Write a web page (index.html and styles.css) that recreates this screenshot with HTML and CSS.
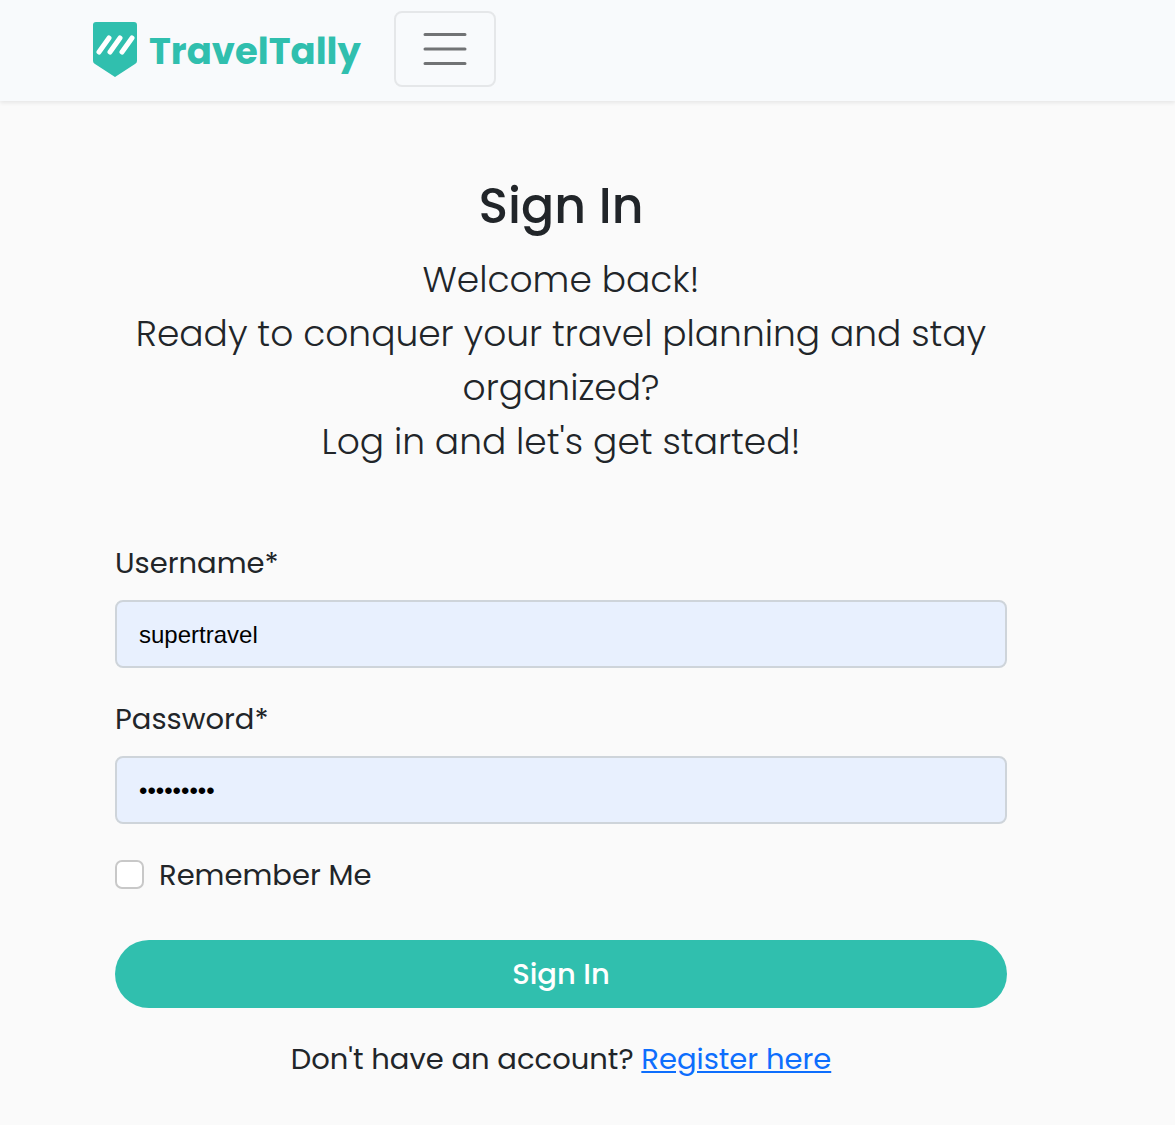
FILE: index.html
```html
<!DOCTYPE html>
<html lang="en">
<head>
  <meta charset="utf-8">
  <meta name="viewport" content="width=device-width, initial-scale=1">
  <title>Sign In | TravelTally</title>
  <link rel="stylesheet" href="styles.css">
</head>
<body>
  <header class="navbar">
    <a class="brand" href="#">
      <svg class="brand-mark" viewBox="0 0 46 56" aria-hidden="true">
        <path fill="#30bfae" d="M4 1h38q3 0 3 3v36q0 2-2 3L23 56 3 43q-2-1-2-3V4q0-3 3-3z"/>
        <path fill="none" stroke="#fff" stroke-width="5" stroke-linecap="round" d="M7 31 17 17M18 31l10-14M30 31l10-14"/>
      </svg>
      <span class="brand-name">TravelTally</span>
    </a>
    <button class="menu-toggle" type="button" aria-label="Toggle navigation">
      <svg class="menu-icon" viewBox="0 0 60 60" aria-hidden="true">
        <path fill="none" stroke="#717375" stroke-width="3" stroke-linecap="round" d="M10 15.500h40M10 30h40M10 44.500h40"/>
      </svg>
    </button>
  </header>

  <main class="page">
    <h1 class="title">Sign In</h1>
    <p class="lead">Welcome back!<br>Ready to conquer your travel planning and stay organized?<br>Log in and let's get started!</p>

    <form class="form">
      <div class="field">
        <label class="label" for="username">Username*</label>
        <input class="input" id="username" type="text" value="supertravel">
      </div>
      <div class="field">
        <label class="label" for="password">Password*</label>
        <input class="input" id="password" type="password" value="traveller">
      </div>
      <div class="remember">
        <input class="check" id="remember" type="checkbox">
        <label class="label" for="remember">Remember Me</label>
      </div>
      <button class="submit" type="submit">Sign In</button>
    </form>
    <p class="register">Don't have an account? <a class="link" href="#">Register here</a></p>
  </main>
</body>
</html>
```
FILE: styles.css
```css
* {
  box-sizing: border-box;
}

body {
  margin: 0;
  background: #fafafa;
  color: #212529;
  font-family: Poppins, Inter, "Open Sans", sans-serif;
  font-size: 29px;
  line-height: 44px;
}

.navbar {
  display: flex;
  align-items: center;
  gap: 33px;
  padding: 11px 92px 14px;
  background: #f8fafc;
  box-shadow: 0 2px 4px rgba(0, 0, 0, 0.08);
}

.brand {
  display: flex;
  align-items: center;
  gap: 11px;
  color: #30bfae;
  text-decoration: none;
}

.brand-mark {
  width: 46px;
  height: 56px;
}

.brand-name {
  padding-top: 4px;
  font-size: 37px;
  font-weight: 700;
}

.menu-toggle {
  display: flex;
  padding: 6px 19px;
  border: 2px solid #e5e7e9;
  border-radius: 8px;
  background: transparent;
}

.menu-icon {
  width: 60px;
  height: 60px;
}

.page {
  padding: 76px 168px 44px 115px;
}

.title {
  margin: 0;
  font-size: 49px;
  font-weight: 500;
  line-height: 58px;
  text-align: center;
}

.lead {
  margin: 18px 0 71px;
  font-size: 36px;
  font-weight: 300;
  line-height: 54px;
  text-align: center;
}

.form {
  display: flex;
  flex-direction: column;
  gap: 28px;
}

.field {
  display: flex;
  flex-direction: column;
  gap: 16px;
}

.label {
  padding-top: 2px;
  line-height: 42px;
}

.input {
  width: 100%;
  height: 68px;
  padding: 2px 22px 0;
  border: 2px solid #ced4da;
  border-radius: 8px;
  background: #e8f0fe;
  color: #000;
  font-family: "Liberation Sans", Arial, sans-serif;
  font-size: 24px;
}

.remember {
  display: flex;
  align-items: center;
  gap: 15px;
}

.check {
  appearance: none;
  width: 29px;
  height: 29px;
  margin: 0;
  border: 2px solid #c8c8c8;
  border-radius: 7px;
  background: #fff;
}

.check:checked {
  background: #30bfae;
}

.submit {
  height: 68px;
  margin-top: 16px;
  border: 0;
  border-radius: 34px;
  background: #30bfae;
  color: #fff;
  font-family: inherit;
  font-size: 29px;
  font-weight: 500;
}

.register {
  margin: 29px 0 0;
  text-align: center;
}

.link {
  color: #0d6efd;
}
```
